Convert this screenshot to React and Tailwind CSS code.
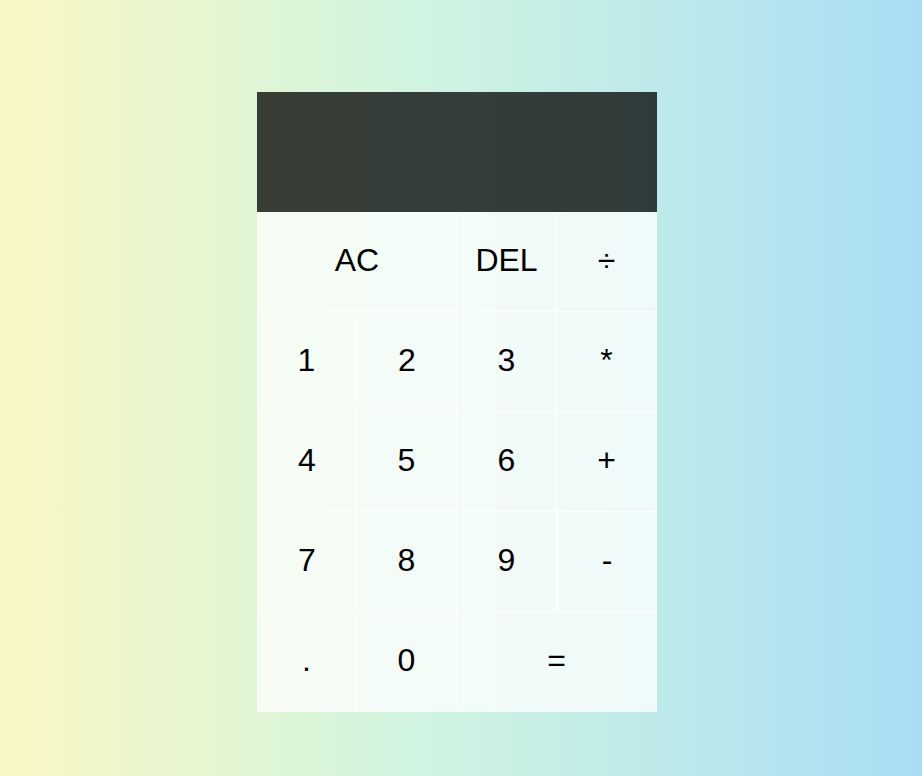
import React from "react";

const rows = [
  [{ t: "AC", span: 2 }, { t: "DEL" }, { t: "÷" }],
  [{ t: "1" }, { t: "2" }, { t: "3" }, { t: "*" }],
  [{ t: "4" }, { t: "5" }, { t: "6" }, { t: "+" }],
  [{ t: "7" }, { t: "8" }, { t: "9" }, { t: "-" }],
  [{ t: "." }, { t: "0" }, { t: "=", span: 2 }],
];

export default function App() {
  return (
    <div
      className="min-h-screen w-full bg-[linear-gradient(to_right,#f9f7c2_0%,#d0f4e0_45%,#a8ddf5_100%)] pt-[92px] pl-[257px]"
      style={{ fontFamily: '"Liberation Sans", Arial, sans-serif' }}
    >
      <div className="w-[400px]">
        <div className="h-[120px] bg-black/75"></div>
        <div className="grid grid-cols-[repeat(4,100px)] auto-rows-[100px]">
          {rows.flat().map((b, i) => (
            <button
              key={i}
              className={
                "flex items-center justify-center bg-white/75 pb-1 text-[32px] leading-none text-black border-white border-r border-b " +
                (b.span === 2 ? "col-span-2 " : "")
              }
              style={{
                borderLeftWidth: [0, 4, 7, 11, 14].includes(i) ? 1 : 0,
              }}
            >
              {b.t}
            </button>
          ))}
        </div>
      </div>
    </div>
  );
}
